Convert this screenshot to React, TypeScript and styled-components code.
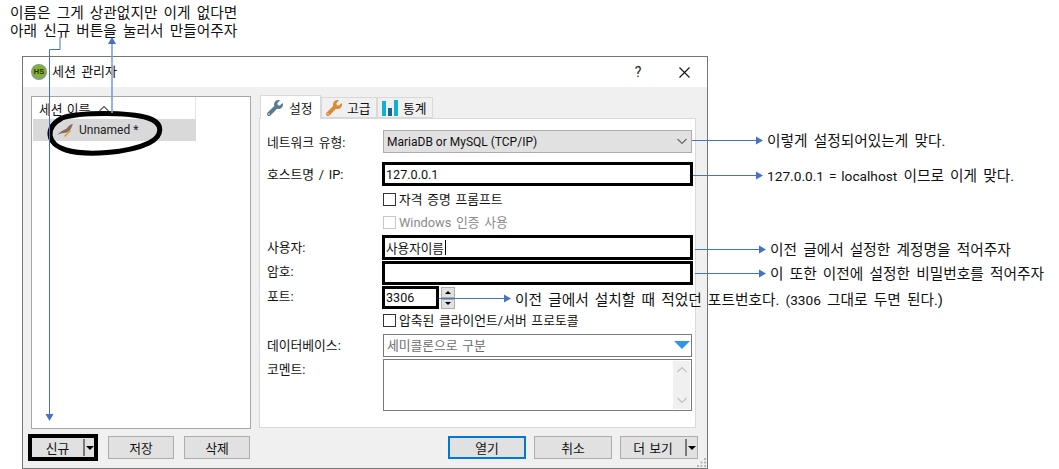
import React from "react";
import styled, { createGlobalStyle } from "styled-components";
import { FaWrench } from "react-icons/fa";

const Global = createGlobalStyle`
  html, body { margin: 0; padding: 0; background: #fff; }
  body { font-family: Roboto, "Noto Sans CJK KR", sans-serif; font-size: 12px; color: #111; overflow: hidden; }
`;

const Page = styled.div`
  position: relative;
  width: 1059px;
  height: 469px;
  overflow: hidden;
`;

const TopNote = styled.div`
  height: 56px;
  box-sizing: border-box;
  padding: 4px 0 0 10px;
  font-size: 14.7px;
  line-height: 18px;
  word-spacing: 2.5px;
  color: #111;
`;

const Window = styled.div`
  position: relative;
  margin-left: 22px;
  width: 686px;
  height: 413px;
  box-sizing: border-box;
  border: 1px solid #767676;
  display: flex;
  flex-direction: column;
  background: #f0f0f0;
`;

const TitleBar = styled.div`
  height: 30px;
  flex: none;
  background: #fff;
  display: flex;
  align-items: center;
  padding-left: 8px;
`;

const TitleText = styled.div`
  font-size: 13px;
  word-spacing: 2px;
  flex: 1;
  margin: -3px 0 0 5px;
`;

const TitleButton = styled.div`
  width: 46px;
  height: 30px;
  display: flex;
  align-items: center;
  justify-content: center;
  font-size: 14px;
  color: #222;
`;

const Main = styled.div`
  flex: 1;
  display: flex;
  gap: 8px;
  padding: 8px 10px 0 8px;
`;

const LeftColumn = styled.div`
  width: 220px;
  display: flex;
  flex-direction: column;
`;

const SessionList = styled.div`
  margin-top: 1px;
  height: 333px;
  box-sizing: border-box;
  background: #fff;
  border: 1px solid #a6a6a6;
  padding: 0 1px;
`;

const ListHeader = styled.div`
  width: 163px;
  height: 22px;
  box-sizing: border-box;
  border-right: 1px solid #e5e5e5;
  display: flex;
  align-items: center;
  gap: 8px;
  padding-left: 6px;
  font-size: 12.8px;
  word-spacing: 1px;
`;

const ListRow = styled.div`
  width: 163px;
  height: 22px;
  background: #d9d9d9;
  display: flex;
  align-items: center;
  gap: 5px;
  padding-left: 24px;
  box-sizing: border-box;
  font-size: 12px;
  color: #222;
`;

const ButtonRow = styled.div`
  margin-top: 7px;
  display: flex;
  align-items: center;
  gap: 10px;
  height: 23px;
`;

const Button = styled.div<{ $w: number; $primary?: boolean }>`
  width: ${(p) => p.$w}px;
  height: 23px;
  box-sizing: border-box;
  background: #e1e1e1;
  border: ${(p) => (p.$primary ? "2px solid #0078d7" : "1px solid #adadad")};
  display: flex;
  align-items: center;
  justify-content: center;
  font-size: 12.8px;
  word-spacing: 1px;
`;

const NewButtonFrame = styled.div`
  margin: 0 0 0 -3px;
  width: 70px;
  height: 27px;
  box-sizing: border-box;
  border: 4px solid #000;
  background: #e1e1e1;
  display: flex;
  align-items: center;
  font-size: 12.8px;
`;

const SplitLabel = styled.div`
  flex: 1;
  text-align: center;
`;

const SplitDivider = styled.div`
  width: 2px;
  height: 17px;
  background: #7a7a7a;
`;

const DropTriangle = styled.div`
  width: 0;
  height: 0;
  margin-left: 1px;
  border-left: 4.5px solid transparent;
  border-right: 4.5px solid transparent;
  border-top: 4.5px solid #000;
`;

const RightColumn = styled.div`
  width: 437px;
  display: flex;
  flex-direction: column;
`;

const TabStrip = styled.div`
  display: flex;
  height: 23px;
  align-items: flex-end;
  padding-left: 1px;
`;

const Tab = styled.div<{ $active?: boolean; $w: number }>`
  width: ${(p) => p.$w}px;
  height: ${(p) => (p.$active ? 24 : 21)}px;
  margin-bottom: ${(p) => (p.$active ? -1 : 0)}px;
  box-sizing: border-box;
  background: ${(p) => (p.$active ? "#fff" : "#f0f0f0")};
  border: 1px solid #d9d9d9;
  border-bottom: ${(p) => (p.$active ? "none" : "1px solid #d9d9d9")};
  position: relative;
  z-index: ${(p) => (p.$active ? 1 : 0)};
  display: flex;
  align-items: center;
  gap: ${(p) => (p.$active ? 6 : 5)}px;
  padding-left: ${(p) => (p.$active ? 6 : 4)}px;
  font-size: 12.8px;
`;

const TabPanel = styled.div`
  height: 310px;
  box-sizing: border-box;
  border: 1px solid #d9d9d9;
  background: #fff;
  padding-left: 7px;
`;

const FormRow = styled.div<{ $h: number; $mt: number }>`
  display: grid;
  grid-template-columns: 116px 1fr;
  height: ${(p) => p.$h}px;
  margin-top: ${(p) => p.$mt}px;
  width: 425px;
`;

const Label = styled.div`
  grid-column: 1;
  align-self: center;
  margin-top: -2px;
  font-size: 12.8px;
  word-spacing: 1.5px;
`;

const ShiftedLabel = styled(Label)<{ $nudge: number }>`
  margin-top: ${(p) => p.$nudge}px;
`;

const TopLabel = styled(Label)`
  align-self: start;
  margin-top: 0;
`;

const Combo = styled.div`
  grid-column: 2;
  box-sizing: border-box;
  background: #e1e1e1;
  border: 1px solid #adadad;
  display: flex;
  align-items: center;
  justify-content: space-between;
  padding: 0 3px 0 3px;
  font-size: 12px;
`;

const MarkedInput = styled.div<{ $w?: number }>`
  grid-column: 2;
  margin-left: -1px;
  width: ${(p) => p.$w ?? 311}px;
  box-sizing: border-box;
  border: 3px solid #000;
  background: #fff;
  display: flex;
  align-items: center;
  padding-left: 1px;
  font-size: 12.6px;
`;

const Caret = styled.span`
  display: inline-block;
  width: 1px;
  height: 15px;
  background: #000;
  margin-left: 1px;
`;

const CheckRow = styled.label<{ $disabled?: boolean }>`
  grid-column: 2;
  display: flex;
  align-items: center;
  gap: 3px;
  margin-top: -1px;
  font-size: 12.8px;
  word-spacing: 1.5px;
  color: ${(p) => (p.$disabled ? "#8a8a8a" : "#111")};
`;

const CheckBox = styled.span<{ $disabled?: boolean }>`
  width: 13px;
  height: 13px;
  position: relative;
  top: 1px;
  box-sizing: border-box;
  border: 1px solid ${(p) => (p.$disabled ? "#c8c8c8" : "#333")};
  background: #fff;
`;

const PortCell = styled.div`
  grid-column: 2;
  display: flex;
  gap: 2px;
`;

const Spin = styled.div`
  width: 14px;
  height: 22px;
  margin-top: 1px;
  display: flex;
  flex-direction: column;
  gap: 1px;
`;

const SpinPart = styled.div<{ $up?: boolean }>`
  flex: 1;
  background: #e1e1e1;
  border: 1px solid #adadad;
  display: flex;
  align-items: center;
  justify-content: center;
  &::before {
    content: "";
    border-left: 3px solid transparent;
    border-right: 3px solid transparent;
    ${(p) => (p.$up ? "border-bottom: 3px solid #000;" : "border-top: 3px solid #000;")}
  }
`;

const DbField = styled.div`
  grid-column: 2;
  box-sizing: border-box;
  border: 1px solid #7a7a7a;
  background: #fff;
  display: flex;
  align-items: center;
  justify-content: space-between;
  padding: 0 1px 2px 3px;
  color: #6d6d6d;
  font-size: 12.8px;
  word-spacing: 1.5px;
`;

const BlueTriangle = styled.div`
  width: 0;
  height: 0;
  border-left: 8px solid transparent;
  border-right: 8px solid transparent;
  border-top: 8px solid #2f95ea;
`;

const CommentBox = styled.div`
  grid-column: 2;
  box-sizing: border-box;
  border: 1px solid #7a7a7a;
  background: #fff;
  display: flex;
  justify-content: flex-end;
  padding: 1px;
`;

const FakeScroll = styled.div`
  width: 17px;
  background: #f0f0f0;
  display: flex;
  flex-direction: column;
  justify-content: space-between;
  align-items: center;
  padding: 5px 0;
  box-sizing: border-box;
`;

const RightButtons = styled.div`
  margin: 8px -2px 0 0;
  display: flex;
  justify-content: flex-end;
  gap: 8px;
`;

const MoreButton = styled.div`
  width: 78px;
  height: 23px;
  box-sizing: border-box;
  background: #e1e1e1;
  border: 1px solid #adadad;
  display: flex;
  align-items: center;
  padding-right: 1px;
  font-size: 12.8px;
  word-spacing: 1px;
`;

const Grip = styled.svg`
  position: absolute;
  right: 1px;
  bottom: 1px;
`;

const Overlay = styled.svg`
  position: absolute;
  left: 0;
  top: 0;
  pointer-events: none;
`;

const Callout = styled.div<{ $x: number; $y: number }>`
  position: absolute;
  left: ${(p) => p.$x}px;
  top: ${(p) => p.$y}px;
  transform: translateY(-50%);
  white-space: nowrap;
  font-size: 14.7px;
  word-spacing: 2.5px;
  color: #111;
`;

const LatinRun = styled.span`
  font-size: 13.7px;
  word-spacing: 1.5px;
`;

const HsLogo = () => (
  <svg width="16" height="16" viewBox="0 0 16 16">
    <circle cx="8" cy="8" r="8" fill="#8d9a88" />
    <circle cx="8" cy="7.4" r="6.4" fill="#7fb52e" />
    <text x="8" y="10" textAnchor="middle" fontSize="7.5" fontWeight="700" fill="#3c2a10" fontFamily="Liberation Sans">HS</text>
  </svg>
);

const Bird = () => (
  <svg width="17" height="14" viewBox="0 0 17 14">
    <path d="M0 12 C3 9 6 7 9 6 C11 4 13 1 16 1 L15 3 C14 7 11 10 7 10 C4 10 2 11 0 12Z" fill="#8c6a62" />
    <path d="M7 13 L13 7 L14 8 L8 14Z" fill="#e8952a" />
  </svg>
);

const ChartIcon = () => (
  <svg width="16" height="16" viewBox="0 0 16 16">
    <rect x="0" y="1" width="4" height="15" fill="#12b0cf" />
    <rect x="6" y="8" width="4" height="8" fill="#12688f" />
    <rect x="12" y="0" width="4" height="16" fill="#12b0cf" />
  </svg>
);

const Chevron = ({ up, color = "#666" }: { up?: boolean; color?: string }) => (
  <svg width="12" height="7" viewBox="0 0 12 7">
    <path d={up ? "M1.5 6 L6 1.5 L10.5 6" : "M1.5 1 L6 5.5 L10.5 1"} fill="none" stroke={color} strokeWidth="1.1" />
  </svg>
);

const Head = ({ x, y }: { x: number; y: number }) => (
  <path d={`M${x} ${y} l-7 -4 v8 Z`} fill="#4472c4" />
);

export default function App() {
  return (
    <Page>
      <Global />
      <TopNote>
        이름은 그게 상관없지만 이게 없다면
        <br />
        아래 신규 버튼을 눌러서 만들어주자
      </TopNote>
      <Window>
        <TitleBar>
          <HsLogo />
          <TitleText>세션 관리자</TitleText>
          <TitleButton>?</TitleButton>
          <TitleButton>
            <svg width="11" height="11" viewBox="0 0 11 11">
              <path d="M0.5 0.5 L10.5 10.5 M10.5 0.5 L0.5 10.5" stroke="#111" strokeWidth="1.1" />
            </svg>
          </TitleButton>
        </TitleBar>
        <Main>
          <LeftColumn>
            <SessionList>
              <ListHeader>
                세션 이름
                <Chevron up color="#555" />
              </ListHeader>
              <ListRow>
                <Bird />
                Unnamed *
              </ListRow>
            </SessionList>
            <ButtonRow>
              <NewButtonFrame>
                <SplitLabel>신규</SplitLabel>
                <SplitDivider />
                <DropTriangle />
              </NewButtonFrame>
              <Button $w={66}>저장</Button>
              <Button $w={66}>삭제</Button>
            </ButtonRow>
          </LeftColumn>
          <RightColumn>
            <TabStrip>
              <Tab $active $w={61}>
                <FaWrench size={16} color="#5b7a90" />
                설정
              </Tab>
              <Tab $w={56}>
                <FaWrench size={16} color="#d98a35" />
                고급
              </Tab>
              <Tab $w={56}>
                <ChartIcon />
                통계
              </Tab>
            </TabStrip>
            <TabPanel>
              <FormRow $h={23} $mt={11}>
                <ShiftedLabel $nudge={0}>네트워크 유형:</ShiftedLabel>
                <Combo>
                  MariaDB or MySQL (TCP/IP)
                  <Chevron />
                </Combo>
              </FormRow>
              <FormRow $h={24} $mt={9}>
                <Label>호스트명 / IP:</Label>
                <MarkedInput>127.0.0.1</MarkedInput>
              </FormRow>
              <FormRow $h={18} $mt={4}>
                <CheckRow>
                  <CheckBox />
                  자격 증명 프롬프트
                </CheckRow>
              </FormRow>
              <FormRow $h={18} $mt={5}>
                <CheckRow $disabled>
                  <CheckBox $disabled />
                  Windows 인증 사용
                </CheckRow>
              </FormRow>
              <FormRow $h={24} $mt={4}>
                <Label>사용자:</Label>
                <MarkedInput>
                  사용자이름
                  <Caret />
                </MarkedInput>
              </FormRow>
              <FormRow $h={24} $mt={2}>
                <ShiftedLabel $nudge={-6}>암호:</ShiftedLabel>
                <MarkedInput />
              </FormRow>
              <FormRow $h={22} $mt={1}>
                <ShiftedLabel $nudge={-4}>포트:</ShiftedLabel>
                <PortCell>
                  <MarkedInput $w={57}>3306</MarkedInput>
                  <Spin>
                    <SpinPart $up />
                    <SpinPart />
                  </Spin>
                </PortCell>
              </FormRow>
              <FormRow $h={18} $mt={3}>
                <CheckRow>
                  <CheckBox />
                  압축된 클라이언트/서버 프로토콜
                </CheckRow>
              </FormRow>
              <FormRow $h={23} $mt={5}>
                <Label>데이터베이스:</Label>
                <DbField>
                  세미콜론으로 구분
                  <BlueTriangle />
                </DbField>
              </FormRow>
              <FormRow $h={52} $mt={2}>
                <TopLabel>코멘트:</TopLabel>
                <CommentBox>
                  <FakeScroll>
                    <Chevron up color="#c0c0c0" />
                    <Chevron color="#c0c0c0" />
                  </FakeScroll>
                </CommentBox>
              </FormRow>
            </TabPanel>
            <RightButtons>
              <Button $w={78} $primary>열기</Button>
              <Button $w={78}>취소</Button>
              <MoreButton>
                <SplitLabel>더 보기</SplitLabel>
                <SplitDivider />
                <DropTriangle />
              </MoreButton>
            </RightButtons>
          </RightColumn>
        </Main>
        <Grip width="9" height="9" viewBox="0 0 9 9">
          <path d="M7 0h2v2H7z M3.5 3.5h2v2h-2z M7 3.5h2v2H7z M0 7h2v2H0z M3.5 7h2v2h-2z M7 7h2v2H7z" fill="#b8b8b8" />
        </Grip>
      </Window>
      <Overlay width="1059" height="469" viewBox="0 0 1059 469">
        <path
          d="M62 118 C80 112 128 112 148 118 C164 123 163 136 149 143 C128 153 86 156 66 150 C47 144 44 128 62 118Z"
          fill="none"
          stroke="#000"
          strokeWidth="5"
        />
        <path d="M60 37 V49.5 H49.5 V414" fill="none" stroke="#4472c4" strokeWidth="1" />
        <path d="M45.5 414 h8 l-4 7 Z" fill="#4472c4" />
        <path d="M112 113 V44" fill="none" stroke="#7d9fd8" strokeWidth="1.6" />
        <path d="M108 44 h8 l-4 -7 Z" fill="#4472c4" />
        <path d="M692 140.5 H757" stroke="#4472c4" strokeWidth="1" />
        <Head x={763} y={140.5} />
        <path d="M693 175.5 H757" stroke="#4472c4" strokeWidth="1" />
        <Head x={763} y={175.5} />
        <path d="M695 249.5 H760" stroke="#4472c4" strokeWidth="1" />
        <Head x={766} y={249.5} />
        <path d="M695 273.5 H760" stroke="#4472c4" strokeWidth="1" />
        <Head x={766} y={273.5} />
        <path d="M439 298.5 H505" stroke="#4472c4" strokeWidth="1" />
        <Head x={511} y={298.5} />
      </Overlay>
      <Callout $x={767} $y={139}>이렇게 설정되어있는게 맞다.</Callout>
      <Callout $x={767} $y={174}>
        <LatinRun>127.0.0.1 = localhost</LatinRun> 이므로 이게 맞다.
      </Callout>
      <Callout $x={770} $y={248}>이전 글에서 설정한 계정명을 적어주자</Callout>
      <Callout $x={770} $y={272}>이 또한 이전에 설정한 비밀번호를 적어주자</Callout>
      <Callout $x={515} $y={298}>
        이전 글에서 설치할 때 적었던 포트번호다. <LatinRun>(3306</LatinRun> 그대로 두면 된다.)
      </Callout>
    </Page>
  );
}
